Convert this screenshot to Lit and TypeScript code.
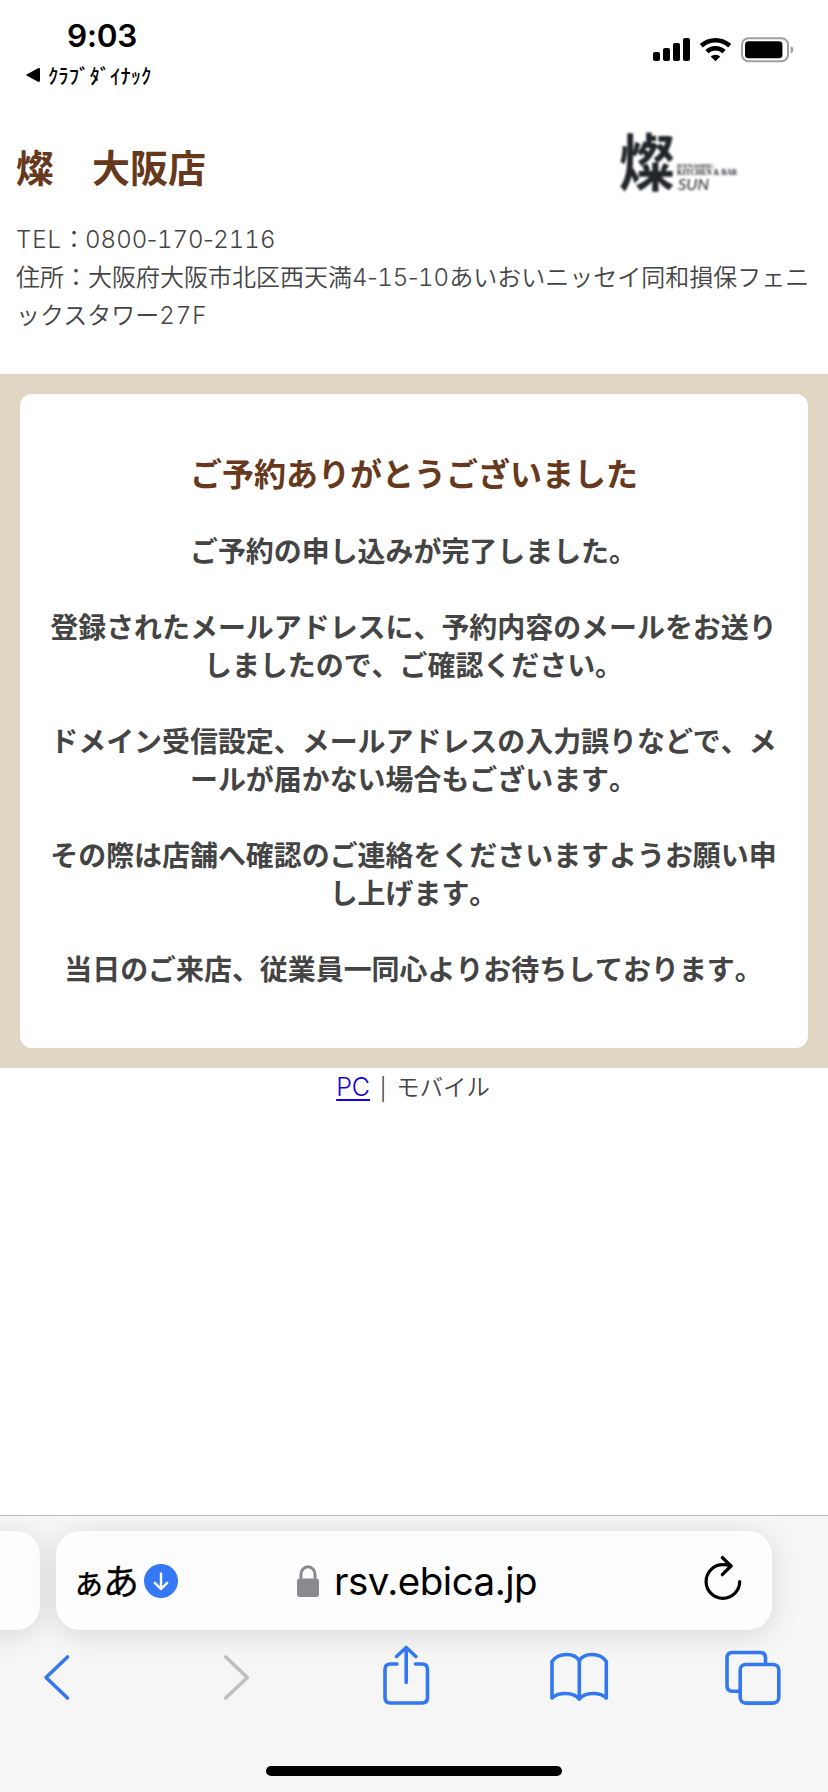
import { LitElement, html, css } from "lit";
import { customElement } from "lit/decorators.js";

@customElement("status-bar")
class StatusBar extends LitElement {
  static styles = css`
    :host { display: flex; justify-content: space-between; height: 96px; box-sizing: border-box; padding: 16px 34px 0 26px; color: #000; }
    .left { display: flex; flex-direction: column; }
    .time { font: 600 31.5px/39px Inter, sans-serif; padding-left: 41px; letter-spacing: -0.2px; }
    .back { display: flex; align-items: center; gap: 8px; height: 30px; margin-top: 5px; font: 500 20.7px/30px "Noto Sans CJK JP", sans-serif; }
    .right { display: block; margin-top: 18px; height: 30px; }
  `;
  render() {
    return html`
      <div class="left">
        <div class="time">9:03</div>
        <div class="back">
          <svg width="14" height="16" viewBox="0 0 14 16"><path d="M1 7.2 12 1.2Q14 .5 14 2.5v11q0 2-2 1.3L1 8.8Q-.5 8 1 7.2Z" /></svg>
          <span>ｸﾗﾌﾞﾀﾞｲﾅｯｸ</span>
        </div>
      </div>
      <svg class="right" width="142" height="30" viewBox="0 0 142 30">
        <g>
          <rect x="1" y="18" width="7" height="9" rx="2" />
          <rect x="11" y="14" width="7" height="13" rx="2" />
          <rect x="21" y="9" width="7" height="18" rx="2" />
          <rect x="31" y="4" width="7" height="23" rx="2" />
        </g>
        <g fill="none" stroke="#000" stroke-width="4.6">
          <path d="M49.3 11.8a20.8 20.8 0 0 1 28.4 0" />
          <path d="M54.9 17.6a12.7 12.7 0 0 1 17.2 0" />
        </g>
        <path d="M58.7 22.5a7.2 7.2 0 0 1 9.6 0L63.5 27.2Z" />
        <rect x="90" y="4.2" width="46" height="23" rx="6.5" fill="none" stroke="#a0a0a0" stroke-width="2" />
        <rect x="93" y="7.2" width="37.4" height="17" rx="3.5" />
        <path d="M138.7 12q2.8 1 2.8 3.7t-2.8 3.7Z" fill="#a0a0a0" />
      </svg>
    `;
  }
}

@customElement("shop-header")
class ShopHeader extends LitElement {
  static styles = css`
    :host { display: block; height: 278px; box-sizing: border-box; padding: 32px 16px 0; color: #444; font-family: "Noto Sans CJK JP", sans-serif; }
    .top { display: flex; justify-content: space-between; height: 88px; }
    h1 { margin: 0; font-size: 38px; line-height: 76px; font-weight: 700; color: #66391c; }
    .logo { width: 124px; height: 68px; margin: 0 70px 0 0; overflow: visible; }
    .info { font-size: 24px; line-height: 38px; font-weight: 350; margin-top: 3px; white-space: nowrap; }
    .row { height: 38.2px; }
    .num { font-family: Inter, sans-serif; font-weight: 300; font-variant-numeric: tabular-nums; line-height: 1; }
    .latin { letter-spacing: 1px; }
    .dash { margin: 0 -2.9px; }
    .tel { margin-left: -1px; }
  `;
  dashed(value: string) {
    return value.split("-").map((part, i) => (i ? html`<span class="dash">-</span>${part}` : part));
  }
  render() {
    return html`
      <div class="top">
        <h1>燦　大阪店</h1>
        <svg class="logo" viewBox="618 128 124 68" fill="#22252c">
          <defs><filter id="soft"><feGaussianBlur stdDeviation="0.8" /></filter></defs>
          <g filter="url(#soft)">
            <text x="619" y="185.500" font-family="Noto Sans CJK JP, sans-serif" font-weight="700" font-size="62" textLength="56" lengthAdjust="spacingAndGlyphs">燦</text>
            <text x="677" y="167.500" font-family="Liberation Serif, serif" font-weight="700" font-size="7" textLength="37" lengthAdjust="spacingAndGlyphs">DYNAMIC</text>
            <text x="677" y="175.300" font-family="Liberation Serif, serif" font-weight="700" font-size="8" textLength="60" lengthAdjust="spacingAndGlyphs">KITCHEN &amp; BAR</text>
            <text x="678" y="189.500" font-family="Lato, sans-serif" font-style="italic" font-size="16" textLength="31" lengthAdjust="spacingAndGlyphs">SUN</text>
          </g>
        </svg>
      </div>
      <div class="info">
        <div class="row"><span class="num latin">TEL</span>：<span class="num tel">${this.dashed("0800-170-2116")}</span></div>
        <div class="row">住所：大阪府大阪市北区西天満<span class="num">${this.dashed("4-15-10")}</span>あいおいニッセイ同和損保フェニ</div>
        <div class="row">ックスタワー<span class="num latin">27F</span></div>
      </div>
    `;
  }
}

@customElement("thanks-panel")
class ThanksPanel extends LitElement {
  static styles = css`
    :host { display: block; background: #e1d6c3; padding: 20px; font-family: "Noto Sans CJK JP", sans-serif; }
    .card { background: #fff; border-radius: 12px; height: 654px; box-sizing: border-box; padding-top: 59px; text-align: center; color: #444; font-weight: 700; white-space: nowrap; font-kerning: none; }
    h2 { margin: 0 0 40px; color: #66391c; font-size: 32px; line-height: 38px; font-weight: 700; }
    p { margin: 0 0 38px; padding-right: 1px; font-size: 27.95px; line-height: 38px; }
  `;
  paragraphs = [
    ["ご予約の申し込みが完了しました。"],
    ["登録されたメールアドレスに、予約内容のメールをお送り", "しましたので、ご確認ください。"],
    ["ドメイン受信設定、メールアドレスの入力誤りなどで、メ", "ールが届かない場合もございます。"],
    ["その際は店舗へ確認のご連絡をくださいますようお願い申", "し上げます。"],
    ["当日のご来店、従業員一同心よりお待ちしております。"],
  ];
  render() {
    return html`<div class="card">
      <h2>ご予約ありがとうございました</h2>
      ${this.paragraphs.map((lines) => html`<p>${lines.map((l, i) => (i ? html`<br />${l}` : l))}</p>`)}
    </div>`;
  }
}

@customElement("browser-bar")
class BrowserBar extends LitElement {
  static styles = css`
    :host { display: flex; flex-direction: column; height: 277px; box-sizing: border-box; border-top: 1px solid #bcbcbc; background: #f6f6f6; overflow: hidden; }
    .tabs { display: flex; gap: 16px; height: 99px; margin-top: 15px; }
    .pill { background: #fdfdfd; border-radius: 24px; box-shadow: 0 4px 28px rgba(0, 0, 0, 0.13); }
    .prev { width: 80px; margin-left: -40px; }
    .main { width: 716px; box-sizing: border-box; display: flex; align-items: center; padding: 0 29px 0 19px; }
    .aa { display: flex; align-items: baseline; font-family: "Noto Sans CJK JP", sans-serif; color: #000; line-height: 60px; width: 65px; }
    .small { font-size: 28px; font-weight: 500; width: 28px; }
    .big { font-size: 36px; font-weight: 400; -webkit-text-stroke: 0.4px #000; width: 37px; }
    .dl { margin: 0 0 0 4px; }
    .lock { margin-left: 119px; }
    .url { font: 400 38.5px/60px Inter, sans-serif; margin-left: 15px; width: 204px; white-space: nowrap; letter-spacing: -0.5px; color: #000; }
    .reload { margin: 0 0 5px auto; }
    .tools { display: grid; grid-template-columns: 180px 160px 166px 176px 58px; padding-left: 42px; height: 72px; margin-top: 10px; fill: none; stroke: #3478f0; stroke-width: 3.6; stroke-linecap: round; stroke-linejoin: round; }
    .off { stroke: #bfbfbf; }
    .home { width: 296px; height: 10px; border-radius: 5px; background: #000; margin: 54px auto 0; }
  `;
  render() {
    return html`
      <div class="tabs">
        <div class="pill prev"></div>
        <div class="pill main">
          <div class="aa"><span class="small">あ</span><span class="big">あ</span></div>
          <svg class="dl" width="34" height="34" viewBox="0 0 34 34"><circle cx="17" cy="17" r="17" fill="#3478f6" /><path d="M17 9.5V25M10.8 18.8 17 25l6.2-6.2" fill="none" stroke="#fff" stroke-width="2.4" stroke-linecap="round" stroke-linejoin="round" /></svg>
          <svg class="lock" width="22" height="32" viewBox="0 0 22 32"><rect y="13.5" width="22" height="18.5" rx="3" fill="#8a8a8e" /><path d="M4 15V9.5a7 7.8 0 0 1 14 0V15" fill="none" stroke="#8a8a8e" stroke-width="3" /></svg>
          <span class="url">rsv.ebica.jp</span>
          <svg class="reload" width="40" height="48" viewBox="703 1554 40 48" fill="none" stroke="#000" stroke-width="3.2" stroke-linecap="round" stroke-linejoin="round"><path d="M739.7 1581.5A16.8 16.8 0 1 1 722.9 1564.7Q727 1564.700 731 1566" /><path d="M722.3 1557.500 731 1566l-8.700 8.700" /></svg>
        </div>
      </div>
      <div class="tools">
        <svg width="30" height="72" viewBox="42 1640 30 72"><path d="M67.5 1657 46 1677.5 67.5 1698" /></svg>
        <svg class="off" width="30" height="72" viewBox="222 1640 30 72"><path d="M225.8 1657 247.3 1677.5 225.8 1698" /></svg>
        <svg width="49" height="72" viewBox="382 1640 49 72"><path d="M397 1664H390.500q-5.500 0-5.500 5.500V1697.500q0 5.500 5.500 5.500H422q5.500 0 5.500-5.500V1669.500q0-5.500-5.500-5.500H415.500M406.200 1682.500V1648M396.500 1656.500 406.200 1647.500l9.700 9" /></svg>
        <svg width="62" height="72" viewBox="548 1640 62 72"><path d="M579.300 1661C575 1652.500 558.500 1652 552 1661.500V1698C558 1692 573 1691.500 579.300 1699C585.500 1691.500 600.500 1692 606.300 1698V1661.500C600 1652 583.500 1652.500 579.300 1661V1698" /></svg>
        <svg width="58" height="72" viewBox="724 1640 58 72"><rect x="740.200" y="1664.500" width="38.600" height="38.600" rx="5.500" /><path d="M739 1691.300H732.500q-5.500 0-5.500-5.500V1658q0-5.500 5.500-5.500H760q5.500 0 5.500 5.500V1663" /></svg>
      </div>
      <div class="home"></div>
    `;
  }
}

@customElement("app-root")
class AppRoot extends LitElement {
  static styles = css`
    :host { display: flex; flex-direction: column; width: 828px; height: 1792px; background: #fff; overflow: hidden; }
    .switch { display: flex; justify-content: center; align-items: baseline; gap: 10px; height: 36px; font: 350 23.4px/36px "Noto Sans CJK JP", sans-serif; color: #444; padding-right: 2px; }
    .pc { font-family: Inter, sans-serif; font-weight: 300; font-size: 25px; color: #1400e0; text-decoration: underline; text-underline-offset: 3px; text-decoration-thickness: 2px; }
    .space { flex: 1; }
  `;
  render() {
    return html`
      <status-bar></status-bar>
      <shop-header></shop-header>
      <thanks-panel></thanks-panel>
      <div class="switch"><a class="pc" href="#">PC</a><span>|</span><span>モバイル</span></div>
      <div class="space"></div>
      <browser-bar></browser-bar>
    `;
  }
}
